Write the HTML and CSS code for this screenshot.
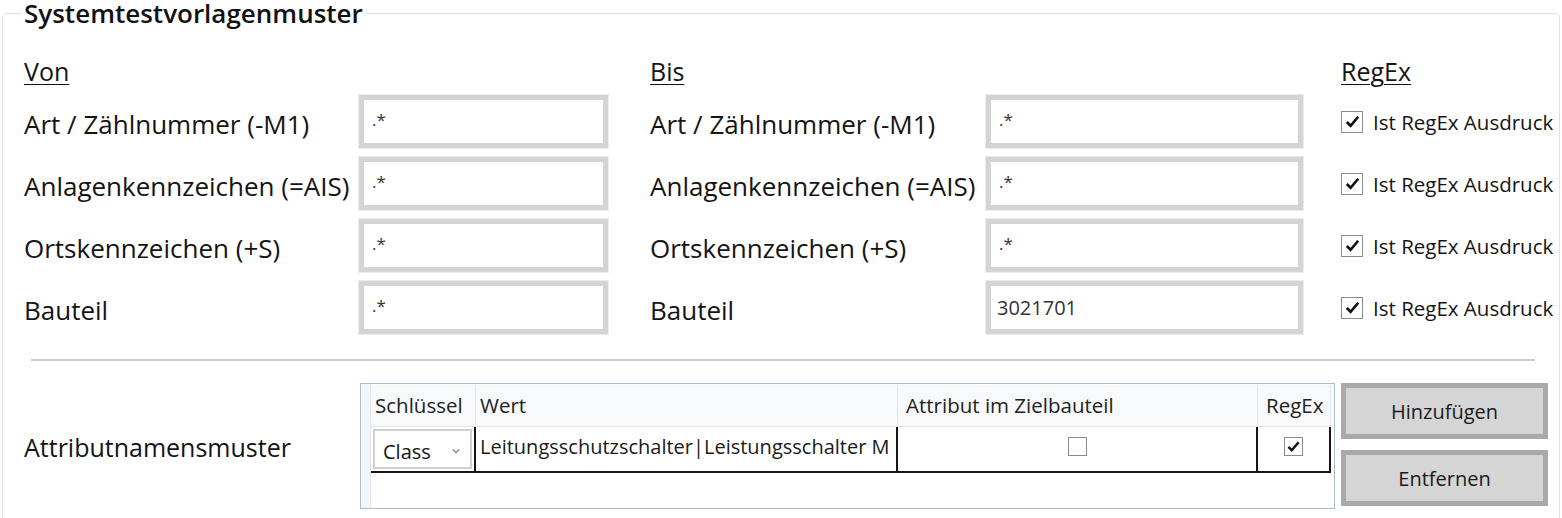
FILE: index.html
```html
<!DOCTYPE html>
<html lang="de">
<head>
<meta charset="utf-8">
<title>Systemtestvorlagenmuster</title>
<link rel="stylesheet" href="styles.css">
</head>
<body>
<fieldset class="group">
  <legend class="title">Systemtestvorlagenmuster</legend>
  <div class="grid">
    <div class="head">Von</div><div></div>
    <div class="head">Bis</div><div></div>
    <div class="head">RegEx</div>

    <div class="label">Art / Zählnummer (-M1)</div>
    <div class="cell"><div class="tb tb-l">.*</div></div>
    <div class="label">Art / Zählnummer (-M1)</div>
    <div class="cell"><div class="tb tb-r">.*</div></div>
    <div class="chk-cell"><span class="cb checked"><svg viewBox="0 0 20 20"><path d="M4 10.5 L8 14.5 L16 5" /></svg></span><span class="chk-text">Ist RegEx Ausdruck</span></div>

    <div class="label">Anlagenkennzeichen (=AIS)</div>
    <div class="cell"><div class="tb tb-l">.*</div></div>
    <div class="label">Anlagenkennzeichen (=AIS)</div>
    <div class="cell"><div class="tb tb-r">.*</div></div>
    <div class="chk-cell"><span class="cb checked"><svg viewBox="0 0 20 20"><path d="M4 10.5 L8 14.5 L16 5" /></svg></span><span class="chk-text">Ist RegEx Ausdruck</span></div>

    <div class="label">Ortskennzeichen (+S)</div>
    <div class="cell"><div class="tb tb-l">.*</div></div>
    <div class="label">Ortskennzeichen (+S)</div>
    <div class="cell"><div class="tb tb-r">.*</div></div>
    <div class="chk-cell"><span class="cb checked"><svg viewBox="0 0 20 20"><path d="M4 10.5 L8 14.5 L16 5" /></svg></span><span class="chk-text">Ist RegEx Ausdruck</span></div>

    <div class="label">Bauteil</div>
    <div class="cell"><div class="tb tb-l">.*</div></div>
    <div class="label">Bauteil</div>
    <div class="cell"><div class="tb tb-r num">3021701</div></div>
    <div class="chk-cell"><span class="cb checked"><svg viewBox="0 0 20 20"><path d="M4 10.5 L8 14.5 L16 5" /></svg></span><span class="chk-text">Ist RegEx Ausdruck</span></div>
  </div>

  <div class="sep"></div>

  <div class="attr">
    <div class="attr-label">Attributnamensmuster</div>
    <div class="table">
      <div class="rowhead"></div>
      <div class="tcols">
        <div class="thead">
          <div class="th c1">Schlüssel</div>
          <div class="th c2">Wert</div>
          <div class="th c3">Attribut im Zielbauteil</div>
          <div class="th c4">RegEx</div>
        </div>
        <div class="trow">
          <div class="td c1"><div class="combo"><span>Class</span><svg class="chev" viewBox="0 0 10 6"><path d="M1 1 L5 5 L9 1"/></svg></div></div>
          <div class="td c2 val">Leitungsschutzschalter|Leistungsschalter M</div>
          <div class="td c3 center"><span class="cb small"></span></div>
          <div class="td c4 center"><span class="cb small checked"><svg viewBox="0 0 20 20"><path d="M4 10.5 L8 14.5 L16 5" /></svg></span></div>
        </div>
      </div>
    </div>
    <div class="buttons">
      <div class="btn">Hinzufügen</div>
      <div class="btn">Entfernen</div>
    </div>
  </div>
</fieldset>
</body>
</html>
```
FILE: styles.css
```css
html, body {
  margin: 0;
  padding: 0;
  background: #ffffff;
  overflow: hidden;
}
body {
  font-family: "Open Sans", "Noto Sans", sans-serif;
  color: #141414;
  width: 1562px;
  height: 518px;
  padding-top: 3px;
  box-sizing: border-box;
}
.group {
  margin: 0 0 0 2px;
  width: 1558px;
  height: 515px;
  box-sizing: border-box;
  border: 1px solid #dde3ea;
  border-bottom-width: 0;
  border-radius: 5px 5px 0 0;
  padding: 0 0 0 21px;
}
.title {
  font-size: 26px;
  font-weight: 600;
  line-height: 21px;
  padding: 0 3px;
  margin-left: -3px;
  color: #111;
}
.grid {
  display: grid;
  grid-template-columns: 335px 291px 336px 355px 1fr;
  grid-template-rows: 30px repeat(4, 53px);
  row-gap: 9px;
  padding-top: 32px;
  align-items: center;
}
.head {
  font-size: 25px;
  line-height: 30px;
  text-decoration: underline;
  text-underline-offset: 3px;
  text-decoration-thickness: 1px;
}
.label {
  font-size: 26px;
  line-height: 30px;
  padding-top: 5px;
  white-space: nowrap;
}
.cell {
  height: 53px;
}
.tb {
  height: 53px;
  box-sizing: border-box;
  border: 5px solid #d4d4d4;
  box-shadow: 0 0 0 1px #ececec;
  background: #fff;
  font-size: 17px;
  line-height: 40px;
  padding-left: 8px;
  color: #333;
}
.tb-l { width: 249px; }
.tb-r { width: 317px; }
.tb.num { font-size: 20px; line-height: 43px; padding-left: 6px; }
.chk-cell {
  display: flex;
  align-items: center;
  gap: 10px;
}
.cb {
  display: inline-flex;
  width: 22px;
  height: 22px;
  box-sizing: border-box;
  border: 1px solid #8c8c8c;
  background: #fff;
  align-items: center;
  justify-content: center;
}
.cb svg {
  width: 19px;
  height: 19px;
}
.cb svg path {
  fill: none;
  stroke: #111;
  stroke-width: 2.8;
}
.chk-text {
  font-size: 20.5px;
  line-height: 26px;
  white-space: nowrap;
}
.sep {
  margin: 25px 0 0 7px;
  width: 1504px;
  height: 2px;
  background: #cfcfcf;
}
.attr {
  display: flex;
  margin-top: 22px;
  align-items: flex-start;
}
.attr-label {
  width: 336px;
  font-size: 25px;
  line-height: 30px;
  margin-top: 49px;
}
.table {
  width: 975px;
  height: 126px;
  box-sizing: border-box;
  border: 1px solid #a9bbd0;
  display: flex;
  background: #fff;
}
.rowhead {
  width: 9px;
  background: #f4f6f9;
  border-right: 1px solid #e3e8ee;
}
.tcols {
  display: flex;
  flex-direction: column;
}
.thead {
  display: flex;
  height: 42px;
  background: #f8f9fb;
  margin-top: 1px;
}
.th {
  box-sizing: border-box;
  border-right: 1px solid #e3e7ec;
  border-bottom: 1px solid #e3e7ec;
  font-size: 20.5px;
  line-height: 40px;
  padding-left: 4px;
  color: #222;
  white-space: nowrap;
  overflow: hidden;
}
.c1 { width: 105px; }
.c2 { width: 422px; }
.c3 { width: 360px; }
.c4 { width: 73px; }
.th.c3 { padding-left: 8px; }
.th.c4 { padding-left: 8px; }
.trow {
  display: flex;
  height: 46px;
  border-bottom: 2px solid #151515;
  box-sizing: border-box;
}
.td {
  box-sizing: border-box;
  border-right: 2px solid #151515;
  height: 44px;
}
.td.c1 { padding: 2px 0 0 2px; }
.combo {
  width: 99px;
  height: 40px;
  box-sizing: border-box;
  border: 2px solid #d0d0d0;
  background: #fff;
  display: flex;
  align-items: center;
  justify-content: space-between;
  padding: 4px 10px 0 8px;
  font-size: 20px;
}
.chev {
  width: 8px;
  height: 6px;
}
.chev path {
  fill: none;
  stroke: #777;
  stroke-width: 1.4;
}
.val {
  font-size: 20px;
  line-height: 40px;
  padding-left: 4px;
  color: #1a1a1a;
  white-space: nowrap;
  overflow: hidden;
}
.center {
  display: flex;
  justify-content: center;
  padding-top: 10px;
}
.cb.small {
  width: 19px;
  height: 19px;
}
.cb.small svg { width: 17px; height: 17px; }
.buttons {
  margin-left: 6px;
  display: flex;
  flex-direction: column;
  gap: 11px;
}
.btn {
  width: 207px;
  height: 56px;
  box-sizing: border-box;
  border: 5px solid #a9a9a9;
  background: #d5d5d5;
  display: flex;
  align-items: center;
  justify-content: center;
  font-size: 20px;
  color: #1a1a1a;
}
```
